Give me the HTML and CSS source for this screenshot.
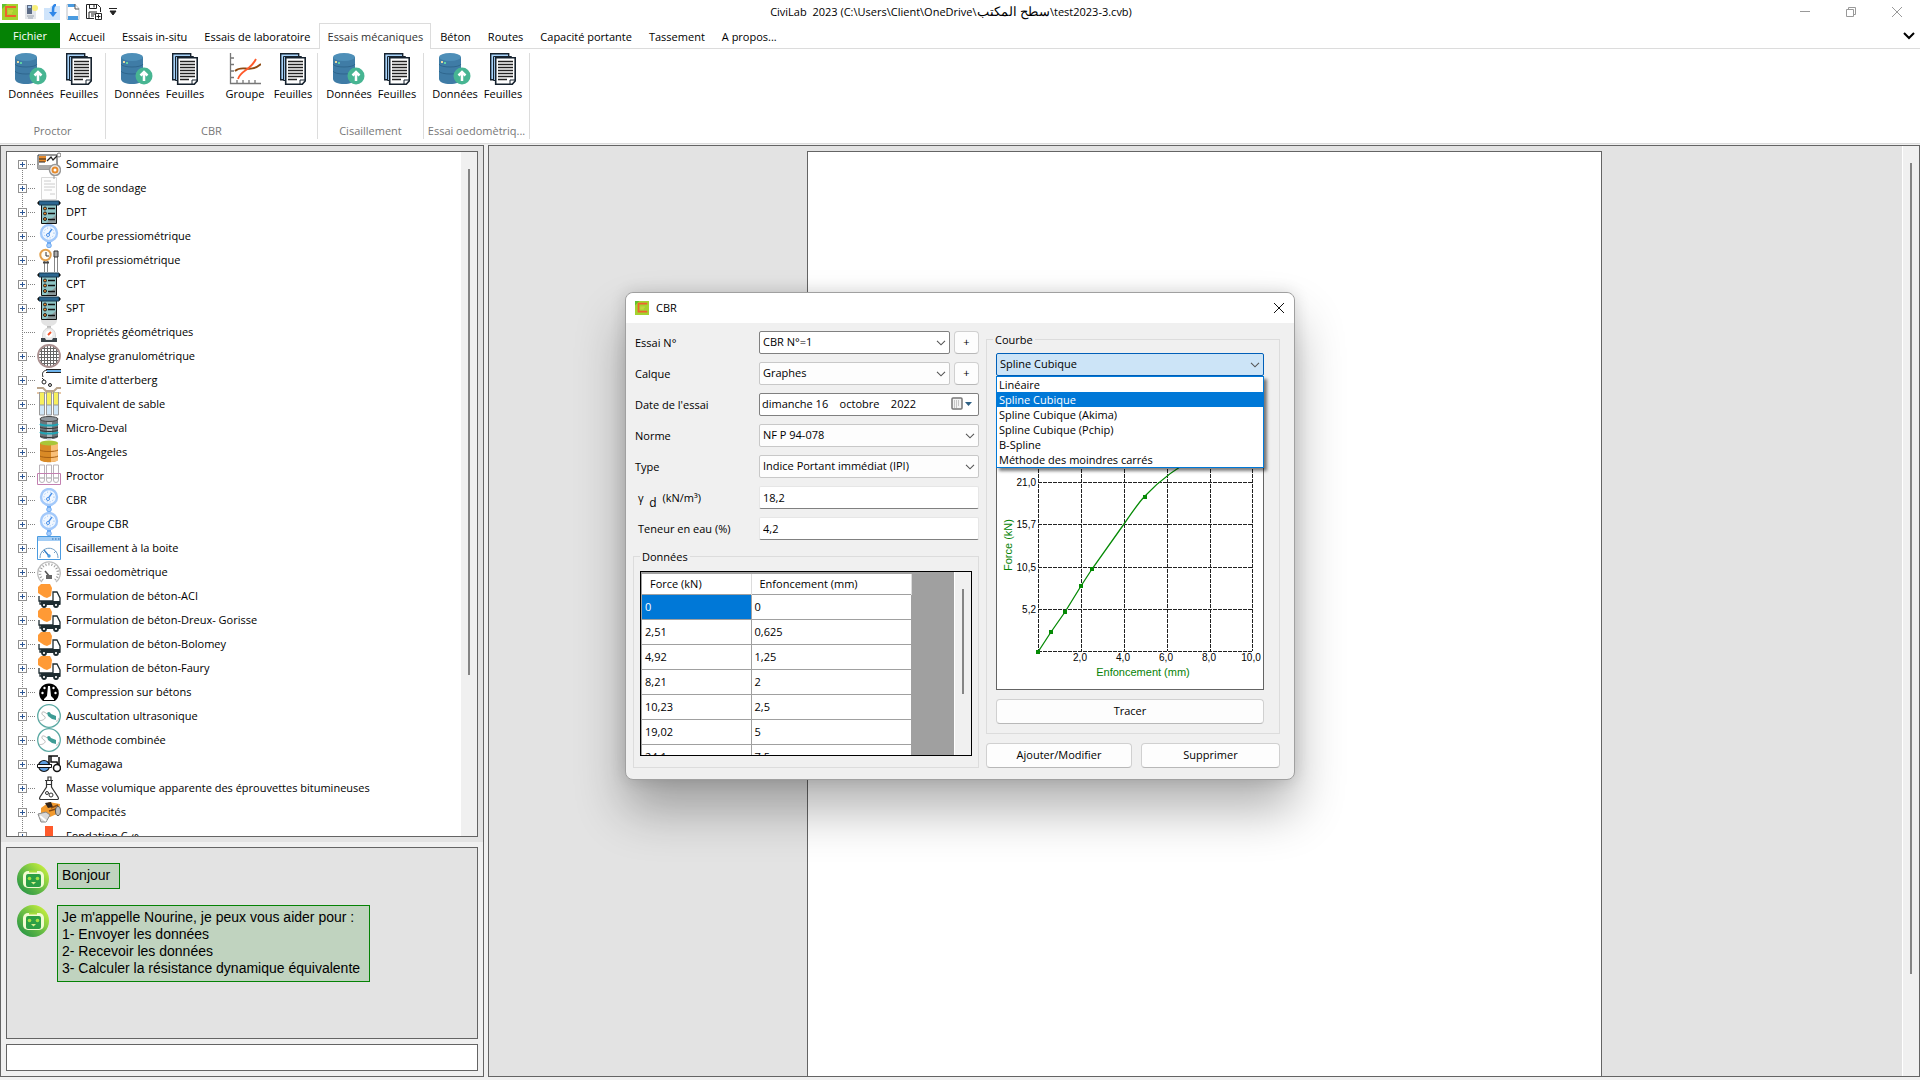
FILE: index.html
```html
<!DOCTYPE html>
<html lang="fr">
<head>
    <meta charset="UTF-8">
    <meta name="viewport" content="width=device-width, initial-scale=1.0">
    <title>CiviLab 2023</title>
    <link rel="stylesheet" href="styles.css">
</head>
<body>
    <!-- Icons -->
    <svg class="sprite" aria-hidden="true">
        <symbol id="i-app" viewBox="0 0 16 16">
            <rect width="16" height="16" fill="#a4d32f"/>
            <path d="M0 0h5L0 5z" fill="#5fc22e"/>
            <path d="M13 4V3H4v9h9v-1" fill="none" stroke="#f0622d" stroke-width="2"/>
            <path d="M6 7h5M6 9h4" stroke="#d8dc4a"/>
        </symbol>
        <symbol id="i-new" viewBox="0 0 16 16">
            <path d="M2 1h8l3 3v11H2z" fill="#e3e6ea"/>
            <rect x="4" y="1" width="5" height="9" fill="#5c6b85"/>
            <rect x="5" y="2" width="3" height="2" fill="#a9c7e8"/>
            <path d="M4 12h7M5 14h5" stroke="#9aa2ad"/>
            <circle cx="12" cy="4" r="3" fill="#f8ef7a"/>
        </symbol>
        <symbol id="i-open" viewBox="0 0 16 16">
            <path d="M0 4h6l1-2h9v14H0z" fill="#cfe4fb"/>
            <path d="M12 1C9 1 9 4 9 9" fill="none" stroke="#2f86e8" stroke-width="2.500"/>
            <path d="M5 8h8l-4 5z" fill="#2f86e8"/>
        </symbol>
        <symbol id="i-page" viewBox="0 0 16 16">
            <path d="M2 .5h8l4 4v11H2z" fill="#fff" stroke="#b9bec6"/>
            <path d="M3 0h7v3H3zM3 12h10v4H3z" fill="#4a9be0"/>
            <path d="M10 0v5h4" fill="none" stroke="#555"/>
        </symbol>
        <symbol id="i-save" viewBox="0 0 16 16">
            <path d="M8 14.500H.5V.5h11l3 3V8M3.500.5v4h7v-4M8 .5v3M3 14V8h8M5 10h4M5 12h3" fill="none" stroke="#222"/>
            <path d="M9.500 9.500h6v6h-6zM12.500 10.500v4M10.500 12.500h4" fill="#fff" stroke="#222"/>
        </symbol>
        <symbol id="i-db" viewBox="0 0 32 32">
            <path d="M0 4v22c0 3 5 5 11 5s11-2 11-5V4z" fill="#3f7ca6"/>
            <path d="M0 11c1 4 21 4 22 0M0 18c1 4 21 4 22 0" fill="none" stroke="#2f678e"/>
            <ellipse cx="11" cy="4" rx="11" ry="4" fill="#4e8fb8"/>
            <path d="M2 9h2" stroke="#e8d9a0" stroke-width="2"/>
            <path d="M5 10h2" stroke="#5fd0a5" stroke-width="2"/>
            <circle cx="23" cy="23" r="8.500" fill="#47b592"/>
            <path d="M23 28v-8M19.500 22.500l3.500-3.500 3.500 3.500" fill="none" stroke="#fff" stroke-width="2.500"/>
        </symbol>
        <symbol id="i-sheets" viewBox="0 0 26 32">
            <path d="M.7.7h18v26h-18z" fill="#a9d4fb" stroke="#16222e" stroke-width="1.400"/>
            <path d="M3.500 3.500h18v24h-18z" fill="#a9d4fb" stroke="#16222e"/>
            <path d="M5.700 4.700h19.500V28l-3 3.300H5.700z" fill="#fff" stroke="#16222e" stroke-width="1.600"/>
            <path d="M8 8.500h15M8 11.500h15M8 14.500h15M8 17.500h15M8 20.500h15M8 23.500h15M8 26.500h9" stroke="#222" stroke-width="1.500"/>
            <path d="M20 31v-4h5" fill="none" stroke="#16222e"/>
        </symbol>
        <symbol id="i-graph" viewBox="0 0 32 32">
            <path d="M1.500 0v30.500H32M2 5h3M2 11.500h3M2 18h3M2 24.500h3M8 30v-3M14 30v-3M20 30v-3M26 30v-3" fill="none" stroke="#777" stroke-width="1.300"/>
            <path d="M6 18c8-7 14 3 26-7" fill="none" stroke="#8d4a12" stroke-width="1.800"/>
            <path d="M9 26c3-9 12-8 18-20" fill="none" stroke="#ff5a2b" stroke-width="1.800"/>
        </symbol>
        <symbol id="i-summary" viewBox="0 0 24 24">
            <path d="M1 3h19v14H1z" fill="#fff" stroke="#333"/>
            <path d="M1 13h19v4H1z" fill="#aaa"/>
            <path d="M2 4h7v6H2z" fill="#e58a2c"/>
            <path d="M2 7h7M2 10h6" stroke="#222"/>
            <path d="M10 9l4-4 2 3 5-5" fill="none" stroke="#222" stroke-width="1.300"/>
            <circle cx="22" cy="3" r="2" fill="#fff" stroke="#777"/>
            <circle cx="18" cy="18" r="5.500" fill="#f4f4f4" stroke="#999" stroke-width="1.500"/>
            <circle cx="18" cy="18" r="2.500" fill="#fff" stroke="#e58a2c" stroke-width="2"/>
        </symbol>
        <symbol id="i-log" viewBox="0 0 24 24">
            <path d="M4.500 1.500h15v22h-15z" fill="#fdfdfd" stroke="#d8d8d8"/>
            <path d="M7 5h7M7 8h11M7 11h11M7 14h8M13 18h5" stroke="#ccc"/>
            <path d="M17 0v3" stroke="#999"/>
        </symbol>
        <symbol id="i-penetro" viewBox="0 0 24 24">
            <path d="M4.500 3.500h15v20h-15z" fill="#8fc5c5" stroke="#111"/>
            <path d="M19 15v8H9z" fill="#8c9a9c"/>
            <path d="M2 1h20v4H2z" fill="#2b6690" stroke="#16384f"/>
            <path d="M0 3l2-2v4zM24 3l-2-2v4z" fill="#111"/>
            <path d="M11 8.500h7M11 13.500h7M11 19.500h7" stroke="#111" stroke-width="1.300"/>
            <g fill="#e88a2a" stroke="#222"><circle cx="8" cy="8.500" r="1.500"/><circle cx="8" cy="13.500" r="1.500"/><circle cx="8" cy="19" r="1.500"/></g>
        </symbol>
        <symbol id="i-gauge" viewBox="0 0 24 24">
            <circle cx="12" cy="9" r="8" fill="#f1f7ff" stroke="#a3c9fa" stroke-width="2.400"/>
            <circle cx="12" cy="9" r="5" fill="none" stroke="#8fbff5" stroke-dasharray="1 2"/>
            <path d="M10 12l5-7" stroke="#4a90e8" stroke-width="1.300"/>
            <circle cx="11" cy="11" r="1.500" fill="#fff" stroke="#4a90e8"/>
            <path d="M10 18h4v2h-4z" fill="#6aa8f3"/>
            <circle cx="12" cy="21.500" r="2.300" fill="#a9cffb" stroke="#6aa8f3"/>
        </symbol>
        <symbol id="i-profile" viewBox="0 0 24 24">
            <path d="M7.500 13v11M10.500 13v11M17.500 8v16M20.500 8v16" stroke="#888"/>
            <path d="M6 14.500h6" stroke="#444" stroke-width="2"/>
            <circle cx="8.500" cy="7" r="5.200" fill="#fffdf5" stroke="#e3a14b" stroke-width="2"/>
            <path d="M9 4v4h3" fill="none" stroke="#333"/>
            <path d="M17 3h4v6h-4z" fill="#aaa" stroke="#333"/>
        </symbol>
        <symbol id="i-scale" viewBox="0 0 24 24">
            <path d="M4 0h16c0 4-4 6-8 6S4 4 4 0z" fill="#e3e3e3"/>
            <path d="M10 6h4v3h-4z" fill="#bbb"/>
            <path d="M6 20c-2-8 2-12 6-12s8 4 6 12z" fill="#ececec" stroke="#d6d6d6"/>
            <circle cx="12" cy="14" r="3.500" fill="#fff"/>
            <path d="M11 15l3-3" stroke="#f2552c" stroke-width="2"/>
            <path d="M4 18h4l1 2h6l1-2h4v4H4z" fill="#3b444a"/>
        </symbol>
        <symbol id="i-sieve" viewBox="0 0 24 24">
            <circle cx="12" cy="12" r="11" fill="#fff"/>
            <path d="M5 4.500h14M3 7.500h18M1 10.500h22M1 13.500h22M3 16.500h18M5 19.500h14M4.500 4v16M7.500 2v20M10.500 1v22M13.500 1v22M16.500 2v20M19.500 4v16" stroke="#666"/>
            <circle cx="12" cy="12" r="11" fill="none" stroke="#a98f8f" stroke-width="1.800"/>
        </symbol>
        <symbol id="i-limit" viewBox="0 0 24 24">
            <path d="M9 1.500h15M9 4.500h15" stroke="#222"/>
            <path d="M10 2h14v2H10z" fill="#6db2ea"/>
            <path d="M10 2C5 3 5 6 6 9M7 12l-2-2" fill="none" stroke="#222"/>
            <circle cx="7" cy="14" r="2" fill="#fff" stroke="#222"/>
            <circle cx="13" cy="17" r="1.500" fill="#ddd" stroke="#222"/>
            <path d="M0 20h6l3 3h8l3-3h4" fill="none" stroke="#b9a48c" stroke-width="2"/>
        </symbol>
        <symbol id="i-sand" viewBox="0 0 24 24">
            <path d="M0 0h24v2H0z" fill="#e6c7a8"/>
            <g fill="#f7ef5d" stroke="#999"><path d="M2.500 0h5v14h-5zM9.500 0h5v14h-5zM16.500 0h5v14h-5z"/></g>
            <g fill="#cfe6f7" stroke="#999"><path d="M2.500 13h5v10h-5zM9.500 13h5v10h-5zM16.500 13h5v10h-5z"/></g>
        </symbol>
        <symbol id="i-deval" viewBox="0 0 24 24">
            <path d="M3 3v18c2 3 16 3 18 0V3z" fill="#6d757b"/>
            <path d="M10 3v20h5V3z" fill="#aeb6bb"/>
            <ellipse cx="12" cy="3" rx="9" ry="2.500" fill="#8f979d" stroke="#444"/>
            <path d="M3 8c2 2 16 2 18 0M3 16c2 2 16 2 18 0" fill="none" stroke="#1fa5b5" stroke-width="2"/>
            <path d="M3 11c2 2 16 2 18 0M3 14c2 2 16 2 18 0M3 20c2 2 16 2 18 0" fill="none" stroke="#333"/>
        </symbol>
        <symbol id="i-la" viewBox="0 0 24 24">
            <path d="M3 3v17c2 3 16 3 18 0V3z" fill="#d98a26"/>
            <path d="M14 3v19c4 0 6-1 7-2V3z" fill="#f9c07a"/>
            <ellipse cx="12" cy="3" rx="9" ry="2.500" fill="#a9c638"/>
            <path d="M3 10c2 2 16 2 18 0M3 16c2 2 16 2 18 0" fill="none" stroke="#a75f12"/>
        </symbol>
        <symbol id="i-tubes" viewBox="0 0 24 24">
            <g fill="#fff" stroke="#b9b3b9"><path d="M2.500 1v15a2 2 0 005 0V1zM9.500 1v15a2 2 0 005 0V1zM16.500 1v15a2 2 0 005 0V1z"/></g>
            <path d="M.5 9.500h23v11H.5z" fill="none" stroke="#c27fb0"/>
            <path d="M3 14h4M10 14h4M17 14h4" stroke="#999"/>
        </symbol>
        <symbol id="i-shear" viewBox="0 0 24 24">
            <path d="M.5.5h23v23H.5z" fill="#fff" stroke="#4a9be0"/>
            <path d="M1 1h22v4H1z" fill="#a3cdf5"/>
            <path d="M15 3h1.500M18 3h1.500M21 3h1.500" stroke="#2d6fae"/>
            <path d="M3 22c0-13 18-13 18 0M5 15l2 2M19 15l-2 2" fill="none" stroke="#6f9dc4"/>
            <path d="M12 20L7 14" stroke="#2f7dc8" stroke-width="1.300"/>
            <circle cx="12" cy="20" r="1.700" fill="#4a9be0"/>
        </symbol>
        <symbol id="i-oedo" viewBox="0 0 24 24">
            <path d="M5 22a11.300 11.300 0 1114 0" fill="#fff" stroke="#bbb" stroke-width="1.300"/>
            <path d="M6 20a9 9 0 1112 0" fill="none" stroke="#999" stroke-width="2.500" stroke-dasharray="1 2"/>
            <path d="M13 17L8 11" stroke="#555" stroke-width="1.500"/>
            <path d="M9 15h6v4H9z" fill="#666"/>
        </symbol>
        <symbol id="i-mixer" viewBox="0 0 24 24">
            <path d="M2 12v5h14V8h4l3 6v6H3v-3" fill="#fff" stroke="#1c2b30" stroke-width="1.300"/>
            <path d="M4 17h19v4H4z" fill="#1c2b30"/>
            <path d="M1 3l3-3h9l2 4-1 8-4 2-3-1-6-4z" fill="#ff9a35"/>
            <g fill="#fff" stroke="#1c2b30" stroke-width="1.800"><circle cx="7" cy="21" r="2"/><circle cx="19" cy="21" r="2"/></g>
        </symbol>
        <symbol id="i-press" viewBox="0 0 24 24">
            <path d="M6 21a9.800 9.800 0 1112 0z" fill="#000"/>
            <g fill="#fff"><circle cx="5.500" cy="13" r="1.200"/><circle cx="18.500" cy="13" r="1.200"/><circle cx="7.500" cy="8" r="1.200"/><circle cx="16.500" cy="8" r="1.200"/><path d="M11 6h2l1 10 3 3v1H7v-1l3-3z"/></g>
        </symbol>
        <symbol id="i-ultra" viewBox="0 0 24 24">
            <circle cx="12" cy="12" r="11.300" fill="#fff" stroke="#5aa9a3" stroke-width="1.300"/>
            <path d="M10 9c2-2 3-1 4 1l5 2v4l-4-1-4-3z" fill="#3e9c95"/>
            <path d="M10 10C5 5 3 10 7 12s-3 6-5 4" fill="none" stroke="#bbb"/>
            <path d="M19 17c3 1 2-3 3-3" fill="none" stroke="#bbb"/>
        </symbol>
        <symbol id="i-roller" viewBox="0 0 24 24">
            <path d="M1 13h14M12 12V4h9M14 4v6h6l1 4M22 5v8h-3" fill="none" stroke="#111" stroke-width="1.500"/>
            <circle cx="7" cy="14" r="5.500" fill="#5f9fe0" stroke="#111" stroke-width="1.200"/>
            <path d="M.5 12.500h14v3H.5z" fill="#fff" stroke="#111"/>
            <circle cx="20" cy="16" r="3.500" fill="#fff" stroke="#111" stroke-width="1.500"/>
        </symbol>
        <symbol id="i-flask" viewBox="0 0 24 24">
            <path d="M8 4.500h8M9 8.500h6M9.500 5v6L3 21c-1 2 0 2.500 1 2.500h16c1 0 2-.5 1-2.500l-6.500-10V5M11 4V1h3v3" fill="#fff" stroke="#333" stroke-width="1.200"/>
            <circle cx="10" cy="17" r="1.500" fill="none" stroke="#333"/><circle cx="14" cy="19" r="2" fill="none" stroke="#333"/>
        </symbol>
        <symbol id="i-compact" viewBox="0 0 24 24">
            <path d="M4 8l8-6 11 2-1 9-9 4-9-2z" fill="#f29a2e"/>
            <path d="M8 3l6-1 2 5-5 1z" fill="#33261c"/>
            <path d="M14 8l7-3M12 11l7-2" stroke="#8a4a10" stroke-width="1.500"/>
            <path d="M1 14l8-2 4 3-4 7H4z" fill="#d9d9d9" stroke="#888"/>
            <path d="M3 16l6 5" stroke="#fff" stroke-width="2"/>
            <ellipse cx="21" cy="11" rx="2.500" ry="4.500" fill="#bfbfbf" stroke="#555"/>
        </symbol>
        <symbol id="i-found" viewBox="0 0 24 24">
            <path d="M8 2h8v10H8z" fill="#ff5a2b"/><path d="M0 12h24v6H0z" fill="#ff9a35"/>
        </symbol>
        <symbol id="i-bot" viewBox="0 0 32 32">
            <circle cx="16" cy="16" r="16" fill="url(#botFill)"/>
            <rect x="6" y="8" width="21" height="17" rx="5" fill="#f3fbd2"/>
            <path d="M12 8.500h8" stroke="#a4dc3b" stroke-width="2"/>
            <rect x="9" y="11" width="15" height="13" rx="2" fill="#2c9f45"/>
            <circle cx="12.500" cy="15.500" r="1.800" fill="#a5e043"/><circle cx="20.500" cy="15.500" r="1.800" fill="#a5e043"/>
            <path d="M14 19h5l-2.500 2.500z" fill="#d6f08a"/>
        </symbol>
        <symbol id="i-chevron" viewBox="0 0 10 6"><path d="M1 .8l4 4 4-4" fill="none" stroke="#555" stroke-width="1.100"/></symbol>
        <linearGradient id="botFill" x1="1" y1="0" x2="0" y2="1"><stop offset=".1" stop-color="#c9f03c"/><stop offset=".5" stop-color="#6cbf45"/><stop offset="1" stop-color="#178a45"/></linearGradient>
    </svg>

    <!-- Title bar -->
    <header class="titlebar">
        <div class="quick">
            <button aria-label="CiviLab"><svg><use href="#i-app"/></svg></button>
            <button aria-label="Nouveau"><svg><use href="#i-new"/></svg></button>
            <button aria-label="Ouvrir"><svg><use href="#i-open"/></svg></button>
            <button aria-label="Page"><svg><use href="#i-page"/></svg></button>
            <button aria-label="Enregistrer"><svg><use href="#i-save"/></svg></button>
            <button aria-label="Personnaliser" class="more"><svg viewBox="0 0 8 8"><path d="M0 .5h8M1 3h6L4 7z" fill="#222" stroke="#222"/></svg></button>
        </div>
        <h1 class="title">CiviLab&nbsp; 2023 (C:\Users\Client\OneDrive\<bdi>سطح المكتب</bdi>\test2023-3.cvb)</h1>
        <div class="controls">
            <button aria-label="Réduire"><svg viewBox="0 0 10 10"><path d="M0 4.500h10"/></svg></button>
            <button aria-label="Restaurer"><svg viewBox="0 0 10 10"><path d="M.5 2.500h7v7h-7zM2.500 2.500v-2h7v7h-2"/></svg></button>
            <button aria-label="Fermer"><svg viewBox="0 0 10 10"><path d="M0 0l10 10M10 0L0 10"/></svg></button>
        </div>
    </header>

    <!-- Ribbon -->
    <nav class="tabs">
        <a href="#" class="file">Fichier</a>
        <a href="#">Accueil</a>
        <a href="#">Essais in-situ</a>
        <a href="#">Essais de laboratoire</a>
        <a href="#" class="active">Essais mécaniques</a>
        <a href="#">Béton</a>
        <a href="#">Routes</a>
        <a href="#">Capacité portante</a>
        <a href="#">Tassement</a>
        <a href="#">A propos...</a>
        <button class="collapse" aria-label="Réduire le ruban"><svg viewBox="0 0 12 8"><path d="M1 1l5 5 5-5" fill="none" stroke="#000" stroke-width="2"/></svg></button>
    </nav>
    <div class="ribbon">
        <section class="group">
            <div class="tools">
                <button class="tool"><svg><use href="#i-db"/></svg>Données</button>
                <button class="tool"><svg><use href="#i-sheets"/></svg>Feuilles</button>
            </div>
            <h2>Proctor</h2>
        </section>
        <section class="group wide">
            <div class="tools">
                <button class="tool"><svg><use href="#i-db"/></svg>Données</button>
                <button class="tool"><svg><use href="#i-sheets"/></svg>Feuilles</button>
                <button class="tool second"><svg><use href="#i-graph"/></svg>Groupe</button>
                <button class="tool"><svg><use href="#i-sheets"/></svg>Feuilles</button>
            </div>
            <h2>CBR</h2>
        </section>
        <section class="group">
            <div class="tools">
                <button class="tool"><svg><use href="#i-db"/></svg>Données</button>
                <button class="tool"><svg><use href="#i-sheets"/></svg>Feuilles</button>
            </div>
            <h2>Cisaillement</h2>
        </section>
        <section class="group">
            <div class="tools">
                <button class="tool"><svg><use href="#i-db"/></svg>Données</button>
                <button class="tool"><svg><use href="#i-sheets"/></svg>Feuilles</button>
            </div>
            <h2>Essai oedomètriq...</h2>
        </section>
    </div>

    <main class="workspace">
        <aside class="side">
            <div class="tree-box">
                <ul class="tree">
                    <li><button aria-label="Développer"></button><svg><use href="#i-summary"/></svg>Sommaire</li>
                    <li><button aria-label="Développer"></button><svg><use href="#i-log"/></svg>Log de sondage</li>
                    <li><button aria-label="Développer"></button><svg><use href="#i-penetro"/></svg>DPT</li>
                    <li><button aria-label="Développer"></button><svg><use href="#i-gauge"/></svg>Courbe pressiométrique</li>
                    <li><button aria-label="Développer"></button><svg><use href="#i-profile"/></svg>Profil pressiométrique</li>
                    <li><button aria-label="Développer"></button><svg><use href="#i-penetro"/></svg>CPT</li>
                    <li><button aria-label="Développer"></button><svg><use href="#i-penetro"/></svg>SPT</li>
                    <li><svg><use href="#i-scale"/></svg>Propriétés géométriques</li>
                    <li><button aria-label="Développer"></button><svg><use href="#i-sieve"/></svg>Analyse granulométrique</li>
                    <li><button aria-label="Développer"></button><svg><use href="#i-limit"/></svg>Limite d'atterberg</li>
                    <li><button aria-label="Développer"></button><svg><use href="#i-sand"/></svg>Equivalent de sable</li>
                    <li><button aria-label="Développer"></button><svg><use href="#i-deval"/></svg>Micro-Deval</li>
                    <li><button aria-label="Développer"></button><svg><use href="#i-la"/></svg>Los-Angeles</li>
                    <li><button aria-label="Développer"></button><svg><use href="#i-tubes"/></svg>Proctor</li>
                    <li><button aria-label="Développer"></button><svg><use href="#i-gauge"/></svg>CBR</li>
                    <li><button aria-label="Développer"></button><svg><use href="#i-gauge"/></svg>Groupe CBR</li>
                    <li><button aria-label="Développer"></button><svg><use href="#i-shear"/></svg>Cisaillement à la boite</li>
                    <li><button aria-label="Développer"></button><svg><use href="#i-oedo"/></svg>Essai oedomètrique</li>
                    <li><button aria-label="Développer"></button><svg><use href="#i-mixer"/></svg>Formulation de béton-ACI</li>
                    <li><button aria-label="Développer"></button><svg><use href="#i-mixer"/></svg>Formulation de béton-Dreux- Gorisse</li>
                    <li><button aria-label="Développer"></button><svg><use href="#i-mixer"/></svg>Formulation de béton-Bolomey</li>
                    <li><button aria-label="Développer"></button><svg><use href="#i-mixer"/></svg>Formulation de béton-Faury</li>
                    <li><button aria-label="Développer"></button><svg><use href="#i-press"/></svg>Compression sur bétons</li>
                    <li><button aria-label="Développer"></button><svg><use href="#i-ultra"/></svg>Auscultation ultrasonique</li>
                    <li><button aria-label="Développer"></button><svg><use href="#i-ultra"/></svg>Méthode combinée</li>
                    <li><button aria-label="Développer"></button><svg><use href="#i-roller"/></svg>Kumagawa</li>
                    <li><button aria-label="Développer"></button><svg><use href="#i-flask"/></svg>Masse volumique apparente des éprouvettes bitumineuses</li>
                    <li><button aria-label="Développer"></button><svg><use href="#i-compact"/></svg>Compacités</li>
                    <li><button aria-label="Développer"></button><svg><use href="#i-found"/></svg>Fondation C-φ</li>
                </ul>
                <div class="scroll scroll-tree"></div>
            </div>
            <div class="chat">
                <div class="message"><svg><use href="#i-bot"/></svg><p>Bonjour</p></div>
                <div class="message"><svg><use href="#i-bot"/></svg><p>Je m'appelle Nourine, je peux vous aider pour :<br>1- Envoyer les données<br>2- Recevoir les données<br>3- Calculer la résistance dynamique équivalente</p></div>
            </div>
            <input type="text" class="chat-input" aria-label="Message">
        </aside>
        <section class="canvas">
            <div class="paper"></div>
            <div class="scroll scroll-canvas"></div>
        </section>
    </main>

    <!-- CBR window -->
    <div class="overlay">
        <div class="dialog" role="dialog" aria-labelledby="dialogTitle">
            <header class="dialog-head">
                <svg><use href="#i-app"/></svg>
                <h2 id="dialogTitle">CBR</h2>
                <button aria-label="Fermer la fenêtre"><svg viewBox="0 0 10 10"><path d="M0 0l10 10M10 0L0 10" stroke="#111"/></svg></button>
            </header>
            <form class="dialog-body">
                <div class="left">
                    <div class="fields">
                        <label for="essai">Essai N°</label>
                        <div class="field">
                            <div class="combo strong"><select id="essai"><option>CBR N°=1</option></select><svg><use href="#i-chevron"/></svg></div>
                            <button type="button" class="btn plus" aria-label="Ajouter un essai">+</button>
                        </div>
                        <label for="calque">Calque</label>
                        <div class="field">
                            <div class="combo"><select id="calque"><option>Graphes</option></select><svg><use href="#i-chevron"/></svg></div>
                            <button type="button" class="btn plus" aria-label="Ajouter un calque">+</button>
                        </div>
                        <label for="date">Date de l'essai</label>
                        <div class="field date">
                            <input type="text" id="date" value="dimanche 16    octobre    2022">
                            <button type="button" aria-label="Calendrier"><svg viewBox="0 0 22 14"><rect x="1" y="1" width="10" height="11" rx="1" fill="#f4f4f4" stroke="#777" stroke-width="1.500"/><path d="M3 4h6M3 6h6M3 8h6M3 10h4" stroke="#999" stroke-dasharray="1 1"/><path d="M14 5h7l-3.500 4z" fill="#2d5f83"/></svg></button>
                        </div>
                        <label for="norme">Norme</label>
                        <div class="field">
                            <div class="combo"><select id="norme"><option>NF P 94-078</option></select><svg><use href="#i-chevron"/></svg></div>
                        </div>
                        <label for="type">Type</label>
                        <div class="field">
                            <div class="combo"><select id="type"><option>Indice Portant immédiat (IPI)</option></select><svg><use href="#i-chevron"/></svg></div>
                        </div>
                        <label for="gamma" class="indent">γ&nbsp; <sub>d</sub>&nbsp; (kN/m³)</label>
                        <input type="text" id="gamma" class="text" value="18,2">
                        <label for="teneur" class="indent">Teneur en eau (%)</label>
                        <input type="text" id="teneur" class="text" value="4,2">
                    </div>
                    <fieldset class="data">
                        <legend>Données</legend>
                        <div class="grid">
                            <table>
                                <thead>
                                    <tr><th>Force (kN)</th><th>Enfoncement (mm)</th></tr>
                                </thead>
                                <tbody>
                                    <tr><td class="selected">0</td><td>0</td></tr>
                                    <tr><td>2,51</td><td>0,625</td></tr>
                                    <tr><td>4,92</td><td>1,25</td></tr>
                                    <tr><td>8,21</td><td>2</td></tr>
                                    <tr><td>10,23</td><td>2,5</td></tr>
                                    <tr><td>19,02</td><td>5</td></tr>
                                    <tr><td>24,1</td><td>7,5</td></tr>
                                </tbody>
                            </table>
                            <div class="scroll scroll-grid"></div>
                        </div>
                    </fieldset>
                </div>
                <div class="right">
                    <fieldset class="curve">
                        <legend>Courbe</legend>
                        <div class="combo open">
                            <select id="courbe" aria-label="Courbe"><option>Spline Cubique</option></select><svg><use href="#i-chevron"/></svg>
                            <ul class="options" role="listbox">
                                <li role="option">Linéaire</li>
                                <li role="option" aria-selected="true" class="selected">Spline Cubique</li>
                                <li role="option">Spline Cubique (Akima)</li>
                                <li role="option">Spline Cubique (Pchip)</li>
                                <li role="option">B-Spline</li>
                                <li role="option">Méthode des moindres carrés</li>
                            </ul>
                        </div>
                        <svg class="chart" viewBox="0 0 266 304">
                            <g class="lines">
                                <path d="M41.500 54v212M84.500 54v212M127.500 54v212M170.500 54v212M213.500 54v212M255.500 54v212"/>
                                <path d="M41 97.500h215M41 139.500h215M41 182.500h215M41 224.500h215M41 266.500h215"/>
                            </g>
                            <path class="spline" d="M41 267L54 247 68 227 84 201 95 184 127 139C136 126 142 117 148 111C162 96 180 82 202 71"/>
                            <path class="marks" d="M39 265h4v4h-4zM52 245h4v4h-4zM66 225h4v4h-4zM82 199h4v4h-4zM93 182h4v4h-4zM146 110h4v4h-4z"/>
                            <g class="ticks" text-anchor="end">
                                <text x="39" y="101">21,0</text>
                                <text x="39" y="143">15,7</text>
                                <text x="39" y="186">10,5</text>
                                <text x="39" y="228">5,2</text>
                            </g>
                            <g class="ticks" text-anchor="middle">
                                <text x="83" y="276">2,0</text>
                                <text x="126" y="276">4,0</text>
                                <text x="169" y="276">6,0</text>
                                <text x="212" y="276">8,0</text>
                                <text x="254" y="276">10,0</text>
                            </g>
                            <text class="axis" text-anchor="middle" x="146" y="291">Enfoncement (mm)</text>
                            <text class="axis" text-anchor="middle" transform="translate(15 160) rotate(-90)">Force (kN)</text>
                        </svg>
                        <button type="button" class="btn">Tracer</button>
                    </fieldset>
                    <div class="actions">
                        <button type="button" class="btn">Ajouter/Modifier</button>
                        <button type="button" class="btn">Supprimer</button>
                    </div>
                </div>
            </form>
        </div>
    </div>
</body>
</html>
```
FILE: styles.css
```css
* { box-sizing: border-box; }
body { margin: 0; height: 100vh; display: flex; flex-direction: column; background: #f0f0f0; color: #000; font-family: "Open Sans", "Noto Sans", sans-serif; font-size: 11px; line-height: 16px; overflow: hidden; }
button, input, select { font: inherit; color: inherit; margin: 0; }
button { background: none; border: 0; padding: 0; }
h1, h2, p, ul { margin: 0; padding: 0; font-size: inherit; font-weight: normal; }
ul { list-style: none; }
a { color: inherit; text-decoration: none; }
svg { display: block; flex: none; }
.sprite { position: absolute; width: 0; height: 0; }

/* Title bar */
.titlebar { display: grid; grid-template-columns: 1fr auto 1fr; height: 23px; background: #fff; }
.quick { display: flex; gap: 5px; padding: 3px 2px; }
.quick svg { width: 16px; height: 16px; }
.quick .more svg { width: 8px; height: 8px; }
.quick .more { padding-left: 2px; }
.title { margin-right: 18px; line-height: 23px; }
.title bdi { font-size: 13px; }
.controls { display: flex; justify-content: flex-end; }
.controls button { width: 46px; display: flex; align-items: center; justify-content: center; }
.controls svg { width: 10px; height: 10px; fill: none; stroke: #999; overflow: visible; }

/* Ribbon */
.tabs { display: flex; height: 26px; background: #fff; border-bottom: 1px solid #dcdcdc; }
.tabs a { padding: 0 7px 0 8px; line-height: 25px; border: 1px solid transparent; border-width: 1px 1px 0; margin-bottom: -1px; }
.tabs .file { width: 60px; padding: 0; margin-bottom: 0; text-align: center; background: #058205; color: #fff; border: 0; }
.tabs .active { background: #fff; border-color: #dcdcdc; color: #333; }
.collapse { margin-left: auto; padding: 0 5px; }
.collapse svg { width: 12px; height: 8px; }
.ribbon { display: flex; height: 95px; padding: 4px 0; background: #fff; border-bottom: 1px solid #dcdcdc; }
.group { width: 106px; display: flex; flex-direction: column; justify-content: space-between; border-right: 1px solid #dcdcdc; color: #777; text-align: center; }
.group.wide { width: 212px; }
.tools { display: flex; padding-left: 7px; color: #000; }
.tool { display: flex; flex-direction: column; align-items: center; gap: 1px; width: 48px; white-space: nowrap; }
.tool svg { width: 32px; height: 32px; }
.tool.second { margin-left: 12px; }
.group h2 { line-height: 16px; white-space: nowrap; }

/* Workspace */
.workspace { flex: 1; min-height: 0; display: flex; gap: 4px; padding: 1px 0 3px; }
.side { width: 484px; display: flex; flex-direction: column; gap: 5px; padding: 5px; border: 1px solid #646464; }
.tree-box { flex: 1; min-height: 0; display: flex; background: #fff; border: 1px solid #646464; outline: 5px solid #e3e3e3; margin-bottom: 5px; overflow: hidden; }
.tree { flex: 1; }
.tree li { display: flex; align-items: center; gap: 5px; height: 24px; padding-left: 30px; position: relative; background: repeating-linear-gradient(to bottom, #808080 0 1px, transparent 1px 2px) 15px 0 / 1px 24px no-repeat, repeating-linear-gradient(to right, #808080 0 1px, transparent 1px 2px) 15px 12px / 14px 1px no-repeat; }
.tree li:first-child { background-position: 15px 12px; }
.tree svg { width: 24px; height: 24px; }
.tree button { position: absolute; left: 11px; top: 8px; width: 9px; height: 9px; border: 1px solid #919191; background: linear-gradient(#2b5797, #2b5797) center / 5px 1px no-repeat, linear-gradient(#2b5797, #2b5797) center / 1px 5px no-repeat, #fff; }
.scroll { flex: none; width: 16px; background: #f0f0f0; }
.scroll::before { content: ""; display: block; width: 2px; margin-left: 7px; background: #858585; }
.scroll-tree::before { height: 74%; margin-top: 17px; }
.chat { height: 192px; display: flex; flex-direction: column; gap: 10px; padding: 15px 10px; background: #e3e3e3; border: 1px solid #646464; }
.message { display: flex; align-items: flex-start; gap: 8px; }
.message svg { width: 32px; height: 32px; }
.message p { padding: 3px 9px 4px 4px; background: #c0d3bf; border: 1px solid #058205; font-family: "Liberation Sans", Arial, sans-serif; font-size: 14px; line-height: 17px; }
.chat-input { height: 27px; background: #fff; border: 1px solid #646464; }
.canvas { flex: 1; display: flex; background: #e3e3e3; border: 1px solid #646464; padding-left: 17px; }
.paper { width: 795px; margin: 5px auto 0; background: #fff; border: 1px solid #646464; border-bottom: 0; }
.scroll-canvas { width: 17px; border-left: 1px solid #fff; }
.scroll-canvas::before { height: 811px; margin-top: 17px; }

/* CBR window */
.overlay { position: absolute; inset: 0; display: flex; align-items: center; justify-content: center; padding-bottom: 9px; }
.dialog { width: 670px; background: #f0f0f0; border: 1px solid #a0a0a0; border-radius: 8px; box-shadow: 0 30px 50px rgba(0, 0, 0, .3), 0 0 16px rgba(0, 0, 0, .14); }
.dialog-head { display: flex; align-items: center; gap: 6px; height: 30px; padding: 0 10px 0 8px; background: #fff; border-radius: 8px 8px 0 0; }
.dialog-head > svg { width: 16px; height: 14px; }
.dialog-head button { margin-left: auto; }
.dialog-head button svg { width: 10px; height: 10px; overflow: visible; }
.dialog-body { display: flex; gap: 7px; padding: 8px 14px 11px 7px; }
.left { width: 346px; display: flex; flex-direction: column; }
.fields { display: grid; grid-template-columns: 124px 1fr; row-gap: 8px; padding-left: 2px; margin-bottom: 9px; }
.fields label { line-height: 23px; }
.fields label.indent { padding-left: 3px; }
.fields sub { font-size: 12px; line-height: 0; vertical-align: -5px; }
.field { display: flex; gap: 4px; height: 23px; }
.combo { flex: 1; position: relative; height: 23px; }
.combo select { appearance: none; width: 100%; height: 23px; padding: 0 3px; background: #fdfdfd; border: 1px solid #c8c8c8; border-radius: 2px; outline: 0; }
.combo.strong select { background: #fff; border-color: #808080; }
.combo > svg { position: absolute; right: 4px; top: 9px; width: 10px; height: 6px; }
.btn { height: 25px; background: #fdfdfd; border: 1px solid #d0d0d0; border-bottom-color: #b8b8b8; border-radius: 4px; }
.plus { width: 25px; height: 23px; }
.date { align-items: center; gap: 0; padding: 0 5px 0 2px; background: #fff; border: 1px solid #808080; border-radius: 2px; }
.date input { flex: 1; min-width: 0; border: 0; padding: 0; background: none; }
.date svg { width: 22px; height: 14px; }
.text { height: 23px; padding: 0 3px; background: #fff; border: 1px solid #e6e6e6; border-bottom-color: #808080; border-radius: 2px; }
fieldset { margin: 0; min-width: 0; border: 1px solid #dcdcdc; }
legend { padding: 0 2px; line-height: 16px; }
.data { padding: 6px 6px 11px; }
.grid { display: flex; height: 185px; border: 1px solid #000; background: #a0a0a0; overflow: hidden; }
.grid table { border-collapse: collapse; background: #fff; height: max-content; margin: 2px auto 0 1px; }
.grid th { height: 21px; padding: 0 8px; text-align: left; font-weight: normal; border-right: 1px solid #dcdcdc; }
.grid td { height: 25px; padding: 0 3px; border: 1px solid #a0a0a0; border-left: 0; }
.grid th:first-child { width: 109px; }
.grid th:last-child { width: 160px; }
.grid .selected, .options .selected { background: #0078d7; color: #fff; }
.scroll-grid { width: 17px; border-left: 1px solid #fff; }
.scroll-grid::before { height: 105px; margin-top: 17px; }
.right { flex: 1; display: flex; flex-direction: column; gap: 9px; padding-top: 1px; }
.curve { display: flex; flex-direction: column; padding: 5px 15px 9px 9px; }
.curve legend { margin-left: -3px; }
.combo.open { flex: none; margin-bottom: 8px; }
.combo.open select { background: #cce4f7; border-color: #005fb8; }
.options { position: absolute; top: 23px; left: 0; right: 0; background: #fff; border: 1px solid #0078d7; box-shadow: 3px 3px 3px rgba(0, 0, 0, .5); }
.options li { line-height: 15px; padding: 0 2px; }
.chart { width: 100%; background: #fff; border: 1px solid #646464; margin-bottom: 9px; font-family: "Liberation Sans", Arial, sans-serif; }
.lines { stroke: #222; stroke-dasharray: 4 1; fill: none; }
.spline { stroke: #058a05; fill: none; stroke-width: 1.3; }
.marks { fill: #058a05; }
.ticks { font-size: 10px; }
.axis { font-size: 11px; fill: #058205; }
.actions { display: flex; gap: 9px; }
.actions .btn { flex: 145; }
.actions .btn:last-child { flex: 138; }
```
